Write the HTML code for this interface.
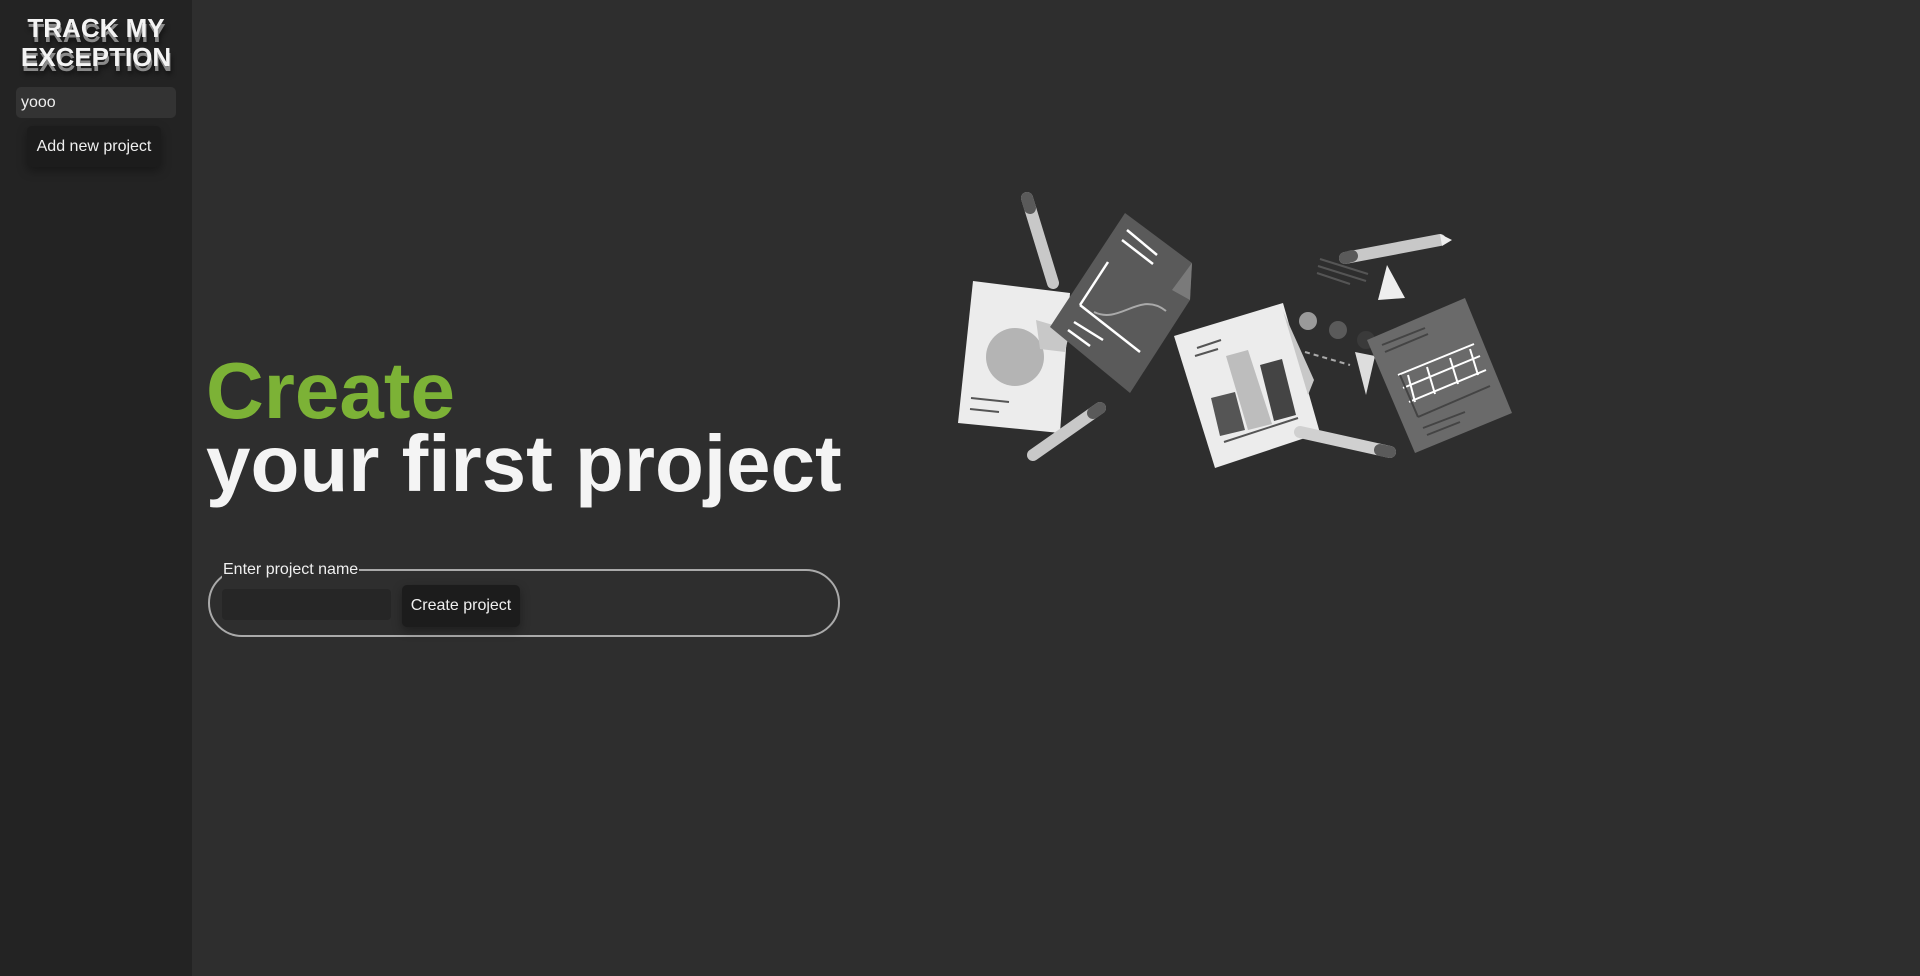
<!DOCTYPE html>
<html><head><meta charset="utf-8"><style>
html,body{margin:0;padding:0;width:1920px;height:976px;overflow:hidden;background:#2e2e2e;font-family:"Segoe UI","Liberation Sans",sans-serif;}
.side{position:absolute;left:0;top:0;width:192px;height:976px;background:#232323;}
.logo{position:absolute;left:0;width:192px;top:14px;text-align:center;color:#f4f4f4;font:bold 26px/29px "Liberation Sans",sans-serif;text-shadow:1px 5px 0 #8a8a8a,2px 8px 5px #111;}
.sin{position:absolute;left:16px;top:87px;width:160px;height:31px;border-radius:5px;background:#333;color:#eee;font-size:16px;line-height:31px;box-sizing:border-box;padding-left:5px;}
.btn{position:absolute;background:#1c1c1c;color:#f0f0f0;border-radius:5px;font-size:16px;text-align:center;box-shadow:0 4px 10px rgba(0,0,0,.35);}
.h1{position:absolute;left:206px;font-weight:bold;font-family:"Liberation Sans",sans-serif;font-size:80px;}
.fs{position:absolute;left:208px;top:569px;width:632px;height:68px;border:2px solid #aaa;border-radius:36px;box-sizing:border-box;}
.lg{position:absolute;left:222px;top:560px;background:#2e2e2e;color:#f0f0f0;font-size:16px;line-height:20px;padding:0 1px;}
</style></head><body>
<div class="side">
<div class="logo">TRACK MY<br>EXCEPTION</div>
<div class="sin">yooo</div>
<div class="btn" style="left:27px;top:126px;width:134px;height:41px;line-height:41px;">Add new project</div>
</div>
<div class="h1" style="top:345px;color:#7cb236;">Create</div>
<div class="h1" style="top:418px;color:#f4f4f4;">your first project</div>
<div class="fs"></div>
<div class="lg">Enter project name</div>
<div style="position:absolute;left:222px;top:589px;width:169px;height:31px;background:#262626;border-radius:4px;"></div>
<div class="btn" style="left:402px;top:585px;width:118px;height:42px;line-height:42px;">Create project</div>
<svg style="position:absolute;left:0;top:0" width="1920" height="976">
<line x1="1027" y1="198" x2="1053" y2="283" stroke="#c8c8c8" stroke-width="12" stroke-linecap="round"/>
<line x1="1027" y1="198" x2="1030" y2="208" stroke="#5a5a5a" stroke-width="12" stroke-linecap="round"/>
<polygon points="973,281 1070,293 1060,433 958,423" fill="#ececec"/>
<circle cx="1015" cy="357" r="29" fill="#b4b4b4"/>
<polygon points="1036,320 1070,330 1065,352 1040,349" fill="#c8c8c8"/>
<line x1="971" y1="398" x2="1009" y2="402" stroke="#555" stroke-width="2"/>
<line x1="970" y1="409" x2="999" y2="412" stroke="#555" stroke-width="2"/>
<polygon points="1125,213 1192,263 1190,300 1130,393 1050,327" fill="#5a5a5a"/>
<polygon points="1192,263 1190,300 1172,290" fill="#7a7a7a"/>
<g stroke="#fff" stroke-width="2.5"><line x1="1127" y1="230" x2="1157" y2="255"/><line x1="1122" y1="240" x2="1153" y2="264"/><line x1="1108" y1="262" x2="1080" y2="305"/><line x1="1080" y1="305" x2="1140" y2="352"/><line x1="1074" y1="322" x2="1103" y2="340"/><line x1="1068" y1="330" x2="1090" y2="346"/></g>
<path d="M1094,312 C1120,325 1140,290 1166,311" stroke="#aaa" stroke-width="2" fill="none"/>
<line x1="1033" y1="455" x2="1100" y2="408" stroke="#c8c8c8" stroke-width="12" stroke-linecap="round"/>
<line x1="1093" y1="413" x2="1100" y2="408" stroke="#5a5a5a" stroke-width="12" stroke-linecap="round"/>
<polygon points="1174,336 1283,303 1320,433 1215,468" fill="#ececec"/>
<polygon points="1283,311 1314,380 1308,395" fill="#c8c8c8"/>
<polygon points="1211,398 1235,392 1245,430 1220,436" fill="#555"/>
<polygon points="1226,356 1248,350 1272,424 1248,430" fill="#bdbdbd"/>
<polygon points="1260,365 1282,359 1296,415 1274,421" fill="#444"/>
<line x1="1197" y1="348" x2="1221" y2="340" stroke="#555" stroke-width="2"/>
<line x1="1195" y1="356" x2="1218" y2="349" stroke="#555" stroke-width="2"/>
<line x1="1224" y1="442" x2="1298" y2="418" stroke="#555" stroke-width="2"/>
<line x1="1300" y1="432" x2="1390" y2="452" stroke="#d0d0d0" stroke-width="12" stroke-linecap="round"/>
<line x1="1380" y1="450" x2="1390" y2="452" stroke="#5a5a5a" stroke-width="12" stroke-linecap="round"/>
<circle cx="1308" cy="321" r="9" fill="#9a9a9a"/>
<circle cx="1338" cy="330" r="9" fill="#5a5a5a"/>
<circle cx="1366" cy="340" r="9" fill="#3a3a3a"/>
<polygon points="1387,265 1405,298 1378,300" fill="#eee"/>
<polygon points="1355,352 1375,356 1366,395" fill="#ddd"/>
<path d="M1305,352 L1350,365" stroke="#aaa" stroke-width="2" stroke-dasharray="5,4"/>
<line x1="1345" y1="258" x2="1440" y2="240" stroke="#c8c8c8" stroke-width="12" stroke-linecap="round"/>
<line x1="1345" y1="258" x2="1352" y2="256" stroke="#5a5a5a" stroke-width="12" stroke-linecap="round"/>
<polygon points="1440,234 1452,240 1442,246" fill="#eee"/>
<g stroke="#555" stroke-width="2"><line x1="1320" y1="259" x2="1368" y2="274"/><line x1="1318" y1="266" x2="1366" y2="281"/><line x1="1317" y1="273" x2="1350" y2="284"/></g>
<polygon points="1367,340 1465,298 1512,413 1415,453" fill="#6a6a6a"/>
<g stroke="#fff" stroke-width="2"><line x1="1403" y1="388" x2="1480" y2="356"/><line x1="1409" y1="402" x2="1486" y2="370"/><line x1="1415" y1="402" x2="1408" y2="375"/><line x1="1435" y1="394" x2="1427" y2="367"/><line x1="1458" y1="384" x2="1450" y2="358"/><line x1="1478" y1="375" x2="1470" y2="349"/><line x1="1398" y1="375" x2="1474" y2="344"/></g>
<line x1="1400" y1="375" x2="1418" y2="417" stroke="#444" stroke-width="2"/>
<line x1="1418" y1="417" x2="1490" y2="386" stroke="#444" stroke-width="2"/>
<g stroke="#444" stroke-width="2"><line x1="1382" y1="345" x2="1425" y2="328"/><line x1="1385" y1="352" x2="1428" y2="334"/><line x1="1423" y1="428" x2="1465" y2="412"/><line x1="1427" y1="435" x2="1460" y2="422"/></g>
</svg>
</body></html>
